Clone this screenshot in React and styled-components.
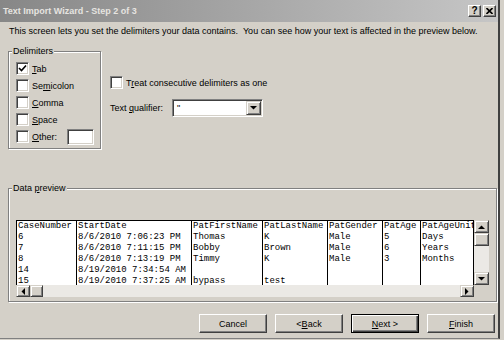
import React from "react";
import styled, { createGlobalStyle } from "styled-components";

const GlobalStyle = createGlobalStyle`
  html, body {
    margin: 0;
    padding: 0;
    background: #d4d0c8;
  }
  body {
    font-family: "Liberation Sans", Arial, sans-serif;
    font-size: 9px;
    color: #000;
  }
`;

const Window = styled.div`
  width: 500px;
  height: 339px;
  box-sizing: border-box;
  background: #d4d0c8;
  border-right: 2px solid #404040;
  border-bottom: 1px solid #808080;
  display: flex;
  flex-direction: column;
`;

const TitleBar = styled.div`
  height: 22px;
  flex-shrink: 0;
  display: flex;
  align-items: center;
  gap: 2px;
  padding: 0 2px 0 3px;
  background: linear-gradient(to right, #878787, #c6c6c6);
`;

const Title = styled.span`
  flex: 1;
  color: #e6e4e0;
  font-weight: bold;
  font-size: 9px;
`;

const CaptionButton = styled.div`
  width: 13px;
  height: 12px;
  box-sizing: border-box;
  display: flex;
  align-items: center;
  justify-content: center;
  background: #d4d0c8;
  border: 1px solid;
  border-color: #fff #404040 #404040 #fff;
  box-shadow: inset -1px -1px 0 #808080;
  font-weight: bold;
  font-size: 10px;
  line-height: 1;
`;

const Body = styled.div`
  flex: 1;
  display: flex;
  flex-direction: column;
  padding: 0 2px 0 8px;
`;

const Intro = styled.div`
  margin-top: 3px;
  padding-left: 1px;
  line-height: 13px;
  white-space: nowrap;
`;

const Middle = styled.div`
  display: flex;
  margin-top: 13px;
`;

const GroupBox = styled.div`
  position: relative;
  box-sizing: border-box;
  width: ${(p) => p.$width}px;
  height: ${(p) => p.$height}px;
  border: 1px solid #808080;
  box-shadow: inset 1px 1px 0 #fff, 1px 1px 0 #fff;
  padding: ${(p) => p.$pad};
`;

const Legend = styled.span`
  position: absolute;
  top: -7px;
  left: 3px;
  padding: 0 1px;
  line-height: 13px;
  background: #d4d0c8;
`;

const CheckRow = styled.div`
  display: flex;
  align-items: center;
  gap: 3px;
  height: 17px;
  margin-right: ${(p) => (p.$inset ? 6 : 0)}px;
`;

const Box = styled.div`
  width: 13px;
  height: 13px;
  box-sizing: border-box;
  flex-shrink: 0;
  display: flex;
  align-items: center;
  justify-content: center;
  background: #fff;
  border: 1px solid;
  border-color: #808080 #fff #fff #808080;
  box-shadow: inset 1px 1px 0 #404040, inset -1px -1px 0 #d4d0c8;
`;

const TextBox = styled.div`
  margin-left: auto;
  width: 27px;
  height: 16px;
  box-sizing: border-box;
  background: #fff;
  border: 1px solid;
  border-color: #808080 #fff #fff #808080;
  box-shadow: inset 1px 1px 0 #404040, inset -1px -1px 0 #d4d0c8;
`;

const Options = styled.div`
  display: flex;
  flex-direction: column;
  margin-left: 9px;
  padding-top: 23px;
`;

const QualifierRow = styled.div`
  display: flex;
  align-items: center;
  margin-top: 8px;
`;

const FieldLabel = styled.span`
  width: 62px;
`;

const Select = styled.div`
  width: 91px;
  height: 18px;
  box-sizing: border-box;
  display: flex;
  align-items: center;
  background: #fff;
  border: 1px solid;
  border-color: #808080 #fff #fff #808080;
  box-shadow: inset 1px 1px 0 #404040, inset -1px -1px 0 #d4d0c8;
  padding: 1px;
`;

const SelectValue = styled.span`
  flex: 1;
  padding-left: 3px;
`;

const RaisedButton = styled.div`
  width: ${(p) => p.$w}px;
  height: ${(p) => p.$h}px;
  box-sizing: border-box;
  flex-shrink: 0;
  display: flex;
  align-items: center;
  justify-content: center;
  background: #d4d0c8;
  border: 1px solid;
  border-color: #d4d0c8 #404040 #404040 #d4d0c8;
  box-shadow: inset 1px 1px 0 #fff, inset -1px -1px 0 #808080;
`;

const Preview = styled.div`
  margin-top: 39px;
`;

const GridFrame = styled.div`
  display: grid;
  grid-template-columns: 458px 15px;
  grid-template-rows: 65px 12px;
`;

const Table = styled.div`
  display: flex;
  overflow: hidden;
  background: #fff;
  border-top: 1px solid #000;
  font-family: "Liberation Mono", "Courier New", monospace;
  font-size: 9px;
`;

const Column = styled.div`
  width: ${(p) => p.$w}px;
  flex-shrink: 0;
  box-sizing: border-box;
  border-left: 1px solid #000;
  border-right: ${(p) => (p.$last ? "1px solid #000" : "none")};
`;

const Cell = styled.div`
  height: 11px;
  line-height: 11px;
  padding-left: 1px;
  white-space: nowrap;
  overflow: hidden;
`;

const Track = styled.div`
  display: flex;
  flex-direction: ${(p) => (p.$vertical ? "column" : "row")};
  justify-content: space-between;
  background: #ebe9e5;
`;

const Thumb = styled(RaisedButton)`
  margin-right: auto;
  margin-bottom: auto;
`;

const Corner = styled.div`
  background: #d4d0c8;
`;

const Footer = styled.div`
  display: flex;
  justify-content: flex-end;
  gap: 8px;
  margin-top: 12px;
  padding-right: 1px;
`;

const PushButton = styled.div`
  width: 68px;
  height: 19px;
  box-sizing: border-box;
  display: flex;
  align-items: center;
  justify-content: center;
  background: #d4d0c8;
  border: 1px solid;
  border-color: ${(p) =>
    p.$default ? "#000" : "#fff #404040 #404040 #fff"};
  box-shadow: ${(p) =>
    p.$default
      ? "inset 1px 1px 0 #fff, inset -1px -1px 0 #404040, inset -2px -2px 0 #808080"
      : "inset -1px -1px 0 #808080"};
`;

const Arrow = ({ dir }) => {
  const pts = {
    up: "0,4 7,4 3.5,0.5",
    down: "0,0 7,0 3.5,3.5",
    left: "4,0 4,7 0.5,3.5",
    right: "0,0 0,7 3.5,3.5",
  }[dir];
  const vertical = dir === "up" || dir === "down";
  return (
    <svg width={vertical ? 7 : 4} height={vertical ? 4 : 7}>
      <polygon points={pts} fill="#000" />
    </svg>
  );
};

const Check = () => (
  <svg width="9" height="9" viewBox="0 0 9 9">
    <path d="M1 4 L3.5 6.5 L8 1.5" stroke="#000" strokeWidth="1.6" fill="none" />
  </svg>
);

const columns = [
  { title: "CaseNumber", w: 60, key: "id" },
  { title: "StartDate", w: 115, key: "date" },
  { title: "PatFirstName", w: 71, key: "first" },
  { title: "PatLastName", w: 65, key: "last" },
  { title: "PatGender", w: 55, key: "gender" },
  { title: "PatAge", w: 38, key: "age" },
  { title: "PatAgeUnit", w: 54, key: "unit" },
];

const rows = [
  { id: "6", date: "8/6/2010 7:06:23 PM", first: "Thomas", last: "K", gender: "Male", age: "5", unit: "Days" },
  { id: "7", date: "8/6/2010 7:11:15 PM", first: "Bobby", last: "Brown", gender: "Male", age: "6", unit: "Years" },
  { id: "8", date: "8/6/2010 7:13:19 PM", first: "Timmy", last: "K", gender: "Male", age: "3", unit: "Months" },
  { id: "14", date: "8/19/2010 7:34:54 AM", first: "", last: "", gender: "", age: "", unit: "" },
  { id: "15", date: "8/19/2010 7:37:25 AM", first: "bypass", last: "test", gender: "", age: "", unit: "" },
];

const delimiters = [
  { label: <><u>T</u>ab</>, checked: true },
  { label: <>Se<u>m</u>icolon</> },
  { label: <><u>C</u>omma</> },
  { label: <><u>S</u>pace</> },
];

export default function App() {
  return (
    <>
      <GlobalStyle />
      <Window>
        <TitleBar>
          <Title>Text Import Wizard - Step 2 of 3</Title>
          <CaptionButton>?</CaptionButton>
          <CaptionButton>
            <svg width="7" height="6" viewBox="0 0 7 6">
              <path d="M0.5 0 L6.5 6 M6.5 0 L0.5 6" stroke="#000" strokeWidth="1.6" />
            </svg>
          </CaptionButton>
        </TitleBar>
        <Body>
          <Intro>
            This screen lets you set the delimiters your data contains.&nbsp; You can see how your text is affected in the preview below.
          </Intro>
          <Middle>
            <GroupBox $width={93} $height={98} $pad="8px 0 0 7px">
              <Legend>Delimiters</Legend>
              {delimiters.map((d, i) => (
                <CheckRow key={i}>
                  <Box>{d.checked && <Check />}</Box>
                  <span>{d.label}</span>
                </CheckRow>
              ))}
              <CheckRow $inset>
                <Box />
                <span><u>O</u>ther:</span>
                <TextBox />
              </CheckRow>
            </GroupBox>
            <Options>
              <CheckRow>
                <Box />
                <span>T<u>r</u>eat consecutive delimiters as one</span>
              </CheckRow>
              <QualifierRow>
                <FieldLabel>Text <u>q</u>ualifier:</FieldLabel>
                <Select>
                  <SelectValue>"</SelectValue>
                  <RaisedButton $w={15} $h={14}>
                    <Arrow dir="down" />
                  </RaisedButton>
                </Select>
              </QualifierRow>
            </Options>
          </Middle>
          <Preview>
            <GroupBox $width={489} $height={114} $pad="31px 0 0 7px">
              <Legend>Data <u>p</u>review</Legend>
              <GridFrame>
                <Table>
                  {columns.map((c, i) => (
                    <Column key={c.key} $w={c.w} $last={i === columns.length - 1}>
                      <Cell>{c.title}</Cell>
                      {rows.map((r, j) => (
                        <Cell key={j}>{r[c.key]}</Cell>
                      ))}
                    </Column>
                  ))}
                </Table>
                <Track $vertical>
                  <RaisedButton $w={15} $h={13}><Arrow dir="up" /></RaisedButton>
                  <Thumb $w={15} $h={13} />
                  <RaisedButton $w={15} $h={13}><Arrow dir="down" /></RaisedButton>
                </Track>
                <Track>
                  <RaisedButton $w={14} $h={12}><Arrow dir="left" /></RaisedButton>
                  <Thumb $w={13} $h={12} />
                  <RaisedButton $w={14} $h={12}><Arrow dir="right" /></RaisedButton>
                </Track>
                <Corner />
              </GridFrame>
            </GroupBox>
          </Preview>
          <Footer>
            <PushButton>Cancel</PushButton>
            <PushButton>&lt; <u>B</u>ack</PushButton>
            <PushButton $default><u>N</u>ext &gt;</PushButton>
            <PushButton><u>F</u>inish</PushButton>
          </Footer>
        </Body>
      </Window>
    </>
  );
}
